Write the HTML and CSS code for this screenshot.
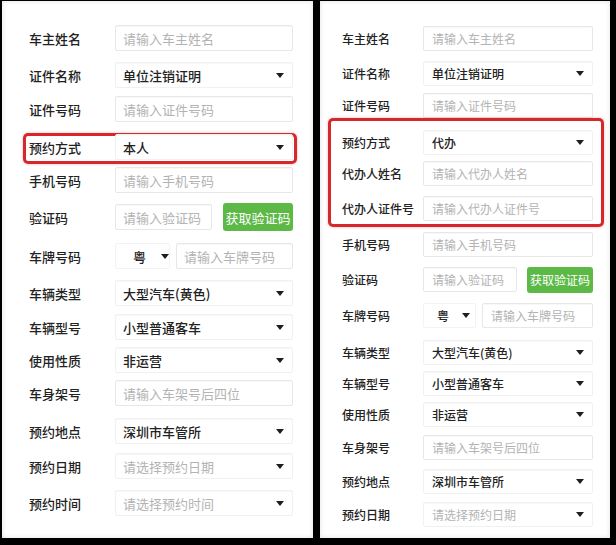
FILE: index.html
```html
<!DOCTYPE html>
<html lang="zh-CN">
<head>
<meta charset="utf-8">
<title>预约表单</title>
<link rel="stylesheet" href="styles.css">
</head>
<body>
<div class="screen">
  <section class="panel panel-left">
    <div class="row"><span class="label">车主姓名</span><div class="field ph">请输入车主姓名</div></div>
    <div class="row"><span class="label">证件名称</span><div class="field select">单位注销证明<i class="caret"></i></div></div>
    <div class="row"><span class="label">证件号码</span><div class="field ph">请输入证件号码</div></div>
    <div class="highlight hl-left">
      <div class="row"><span class="label">预约方式</span><div class="field select">本人<i class="caret"></i></div></div>
    </div>
    <div class="row"><span class="label">手机号码</span><div class="field ph">请输入手机号码</div></div>
    <div class="row"><span class="label">验证码</span><div class="field ph">请输入验证码</div><button class="code-btn">获取验证码</button></div>
    <div class="row"><span class="label">车牌号码</span><div class="prefix">粤<i class="caret"></i></div><div class="field ph">请输入车牌号码</div></div>
    <div class="row"><span class="label">车辆类型</span><div class="field select">大型汽车(黄色)<i class="caret"></i></div></div>
    <div class="row"><span class="label">车辆型号</span><div class="field select">小型普通客车<i class="caret"></i></div></div>
    <div class="row"><span class="label">使用性质</span><div class="field select">非运营<i class="caret"></i></div></div>
    <div class="row"><span class="label">车身架号</span><div class="field ph">请输入车架号后四位</div></div>
    <div class="row"><span class="label">预约地点</span><div class="field select">深圳市车管所<i class="caret"></i></div></div>
    <div class="row"><span class="label">预约日期</span><div class="field select ph">请选择预约日期<i class="caret"></i></div></div>
    <div class="row"><span class="label">预约时间</span><div class="field select ph">请选择预约时间<i class="caret"></i></div></div>
  </section>

  <section class="panel panel-right">
    <div class="row"><span class="label">车主姓名</span><div class="field ph">请输入车主姓名</div></div>
    <div class="row"><span class="label">证件名称</span><div class="field select">单位注销证明<i class="caret"></i></div></div>
    <div class="row"><span class="label">证件号码</span><div class="field ph">请输入证件号码</div></div>
    <div class="highlight hl-right">
      <div class="row"><span class="label">预约方式</span><div class="field select">代办<i class="caret"></i></div></div>
      <div class="row"><span class="label">代办人姓名</span><div class="field ph">请输入代办人姓名</div></div>
      <div class="row"><span class="label">代办人证件号</span><div class="field ph">请输入代办人证件号</div></div>
    </div>
    <div class="row"><span class="label">手机号码</span><div class="field ph">请输入手机号码</div></div>
    <div class="row"><span class="label">验证码</span><div class="field ph">请输入验证码</div><button class="code-btn">获取验证码</button></div>
    <div class="row"><span class="label">车牌号码</span><div class="prefix">粤<i class="caret"></i></div><div class="field ph">请输入车牌号码</div></div>
    <div class="row"><span class="label">车辆类型</span><div class="field select">大型汽车(黄色)<i class="caret"></i></div></div>
    <div class="row"><span class="label">车辆型号</span><div class="field select">小型普通客车<i class="caret"></i></div></div>
    <div class="row"><span class="label">使用性质</span><div class="field select">非运营<i class="caret"></i></div></div>
    <div class="row"><span class="label">车身架号</span><div class="field ph">请输入车架号后四位</div></div>
    <div class="row"><span class="label">预约地点</span><div class="field select">深圳市车管所<i class="caret"></i></div></div>
    <div class="row"><span class="label">预约日期</span><div class="field select ph">请选择预约日期<i class="caret"></i></div></div>
  </section>
</div>
</body>
</html>
```

FILE: styles.css
```css
* { box-sizing: border-box; }

html, body {
  margin: 0;
  padding: 0;
  background: #000;
}

body {
  width: 616px;
  height: 545px;
  overflow: hidden;
  font-family: "Noto Sans CJK SC", "Noto Sans", sans-serif;
  color: #222;
}

.screen {
  display: flex;
  gap: 7px;
  padding: 1px 0 0 2px;
}

.panel {
  background: #fff;
  height: 537px;
  display: grid;
  align-content: start;
  align-items: start;
  box-shadow: inset 0 0 5px rgba(0, 0, 0, 0.12);
}

.panel-left {
  width: 311px;
  padding: 24px 16px 0 21px;
  font-size: 13px;
  grid-template-rows: 37px 34px 37px 34px 37px 39px 37px 34px 33px 33px 38px 35px 37px 26px;
}

.panel-right {
  width: 290px;
  padding: 25px 6px 0 8px;
  font-size: 12px;
  grid-template-rows: 35px 32px 25px 114px 35px 36px 37px 31px 31px 33px 34px 33px 25px;
}

.row {
  display: flex;
  align-items: center;
}

.panel-left .row { height: 26px; padding: 0 4px 0 6px; }
.panel-right .row { height: 25px; padding: 0 11px 0 14px; }

.label {
  flex: none;
  font-weight: 500;
  color: #222;
  white-space: nowrap;
}
.panel-left .label { width: 86px; }
.panel-right .label { width: 81px; }

.field {
  flex: 1;
  height: 100%;
  display: flex;
  align-items: center;
  border: 1px solid #e7e7e7;
  border-radius: 2px;
  background: #fff;
  box-shadow: inset 0 1px 1px rgba(0, 0, 0, 0.03);
  color: #222;
  white-space: nowrap;
  min-width: 0;
}
.panel-left .field { padding: 0 8px 0 7px; }
.panel-right .field { padding: 0 8px 0 8px; }

.field.select {
  justify-content: space-between;
  border-color: #f1f1f1;
  font-weight: 500;
}
.field.select.ph { font-weight: 400; }

.ph { color: #b3b3b3; }

.caret {
  flex: none;
  width: 0;
  height: 0;
  border-left: 4px solid transparent;
  border-right: 4px solid transparent;
  border-top: 5px solid #1e1e1e;
}

.code-btn {
  flex: none;
  border: none;
  border-radius: 3px;
  background: #5cb946;
  color: #fff;
  font: inherit;
  padding: 0;
  cursor: pointer;
}
.panel-left .code-btn { width: 70px; height: 28px; margin-left: 11px; }
.panel-right .code-btn { width: 66px; height: 26px; margin-left: 10px; }

.prefix {
  flex: none;
  height: 100%;
  display: flex;
  align-items: center;
  border: 1px solid #f3f3f3;
  border-radius: 2px;
  font-weight: 500;
}
.panel-left .prefix { width: 55px; margin-right: 6px; padding-left: 17px; gap: 15px; }
.panel-right .prefix { width: 53px; margin-right: 6px; padding-left: 13px; gap: 13px; }

.highlight {
  border-radius: 5px;
  box-shadow: inset 0 0 0 3px #d6282b, 0 0 3px rgba(214, 40, 43, 0.35);
}

.hl-left {
  height: 31px;
  padding-top: 1px;
}

.hl-right {
  height: 109px;
  padding: 12px 0 6px;
  display: grid;
  grid-template-rows: 31px 35px 25px;
  align-items: start;
}
```
